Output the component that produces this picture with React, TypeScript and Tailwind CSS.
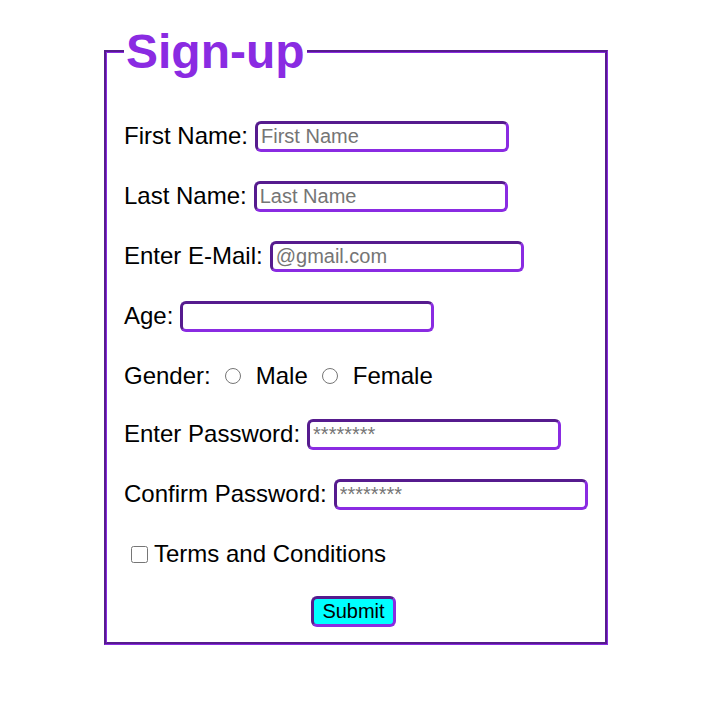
const inputCls =
  'ml-[7px] w-[254px] h-[31px] border-[3px] [border-style:inset] border-[#8a2be2] rounded-[6px] px-[3px] text-[20px] bg-white outline-none placeholder:text-[#757575]';

const Row = ({ label, type = 'text', placeholder }: { label: string; type?: string; placeholder?: string }) => (
  <div className="flex items-center h-[60px]">
    <span>{label}</span>
    <input type={type} placeholder={placeholder} className={inputCls} />
  </div>
);

export default function App() {
  return (
    <div className="min-h-screen bg-white pt-[24px] font-['Liberation_Sans',Arial,sans-serif] text-black">
      <fieldset className="ml-[104px] w-[504px] border-[3px] [border-style:groove] border-[#8a2be2] pt-[27px] px-[17px] pb-[4px] text-[24px]">
        <legend className="px-[2px] text-[48px] font-bold leading-[55px] text-[#8a2be2]">Sign-up</legend>

        <Row label="First Name:" placeholder="First Name" />
        <Row label="Last Name:" placeholder="Last Name" />
        <Row label="Enter E-Mail:" type="email" placeholder="@gmail.com" />
        <Row label="Age:" type="text" />

        <div className="flex items-center h-[60px]">
          <span>Gender:</span>
          <input type="radio" name="gender" className="ml-[14px] mr-[15px] w-4 h-4" />
          <span>Male</span>
          <input type="radio" name="gender" className="ml-[14px] mr-[15px] w-4 h-4" />
          <span>Female</span>
        </div>

        <div className="-mt-[2px]">
          <Row label="Enter Password:" type="password" placeholder="********" />
          <Row label="Confirm Password:" type="password" placeholder="********" />
        </div>

        <div className="flex items-center h-[60px]">
          <input type="checkbox" className="ml-[7px] mr-[6px] w-[17px] h-[17px]" />
          <span>Terms and Conditions</span>
        </div>

        <div className="flex justify-center items-center h-[54px] pr-[5px]">
          <button className="w-[85px] h-[31px] bg-[#00ffff] border-[3px] [border-style:inset] border-[#8a2be2] rounded-[6px] text-[20px] leading-none">
            Submit
          </button>
        </div>
      </fieldset>
    </div>
  );
}
